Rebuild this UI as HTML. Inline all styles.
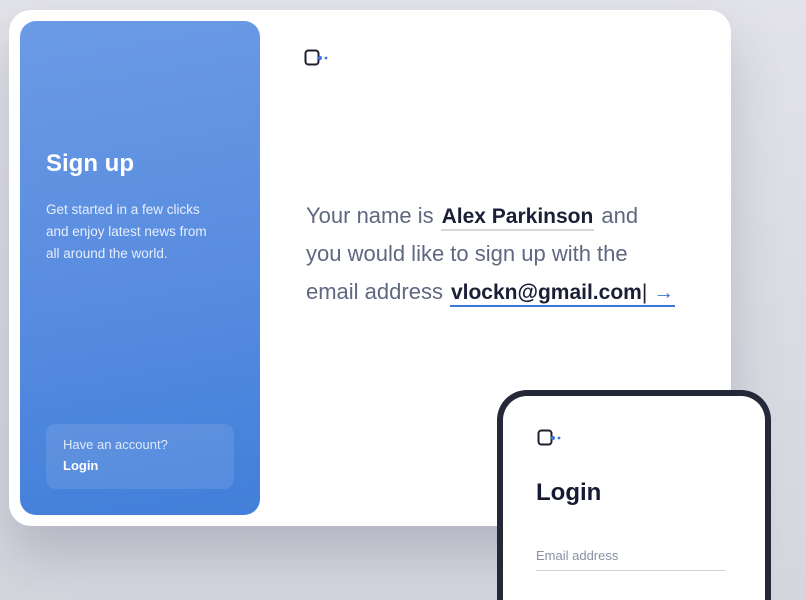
<!DOCTYPE html>
<html style="overflow:hidden;width:806px;height:600px"><head><style>
*{margin:0;padding:0;box-sizing:border-box}
body{width:806px;height:600px;overflow:hidden;background:linear-gradient(180deg,#e2e3e8,#d4d6de);font-family:"Liberation Sans",sans-serif;position:relative}
.card{position:absolute;left:9px;top:10px;width:722px;height:516px;background:#fff;border-radius:22px;box-shadow:0 30px 50px rgba(80,85,110,.25)}
.blue{position:absolute;left:20px;top:21px;width:240px;height:494px;border-radius:16px;background:linear-gradient(170deg,#6b9be6,#5a8de0 50%,#417fda)}
.h{position:absolute;left:46px;top:150px;color:#fff;font-weight:bold;font-size:24px}
.p{position:absolute;left:46px;top:199px;color:#e6eefc;font-size:13.5px;line-height:22px}
.box{position:absolute;left:46px;top:424px;width:188px;height:65px;border-radius:10px;background:rgba(255,255,255,.1);color:#fff}
.box .a{position:absolute;left:17px;top:13px;font-size:13px;color:#dfe8fa}
.box .b{position:absolute;left:17px;top:34px;font-size:13px;font-weight:bold}
.t{position:absolute;left:306px;top:197px;font-size:22px;line-height:38px;color:#5f6781;white-space:nowrap}
.f{color:#1a1f36;font-weight:bold;display:inline-block;line-height:25px;margin:0 7px;padding:0 1px;font-size:21px}
.f1{border-bottom:2px solid #d4d6dc}
.f2{border-bottom:2px solid #3d78db;margin-right:0}
.phone{position:absolute;left:497px;top:390px;width:274px;height:210px;background:#fff;border:6px solid #252839;border-bottom:0;border-radius:30px 30px 0 0}
</style></head><body>
<div class="card"></div>
<div class="blue"></div>
<div class="h">Sign up</div>
<div class="p">Get started in a few clicks<br>and enjoy latest news from<br>all around the world.</div>
<div class="box"><div class="a">Have an account?</div><div class="b">Login</div></div>
<svg style="position:absolute;left:304px;top:49px" width="28" height="18"><rect x="1.5" y="1.5" width="13" height="14" rx="3" fill="none" stroke="#1c1f2c" stroke-width="2"/><circle cx="16" cy="9" r="2" fill="#3b76dc"/><circle cx="22" cy="9" r="1.4" fill="#3b76dc"/></svg>
<div class="t">Your name is<span class="f f1">Alex Parkinson</span>and<br>you would like to sign up with the<br>email address<span class="f f2">vlockn@gmail.com<span style="font-weight:normal">|</span> <span style="color:#3b76dc">→</span></span></div>
<div class="phone">
<svg style="position:absolute;left:34px;top:33px" width="28" height="18"><rect x="1.5" y="1.5" width="13" height="14" rx="3" fill="none" stroke="#1c1f2c" stroke-width="2"/><circle cx="16" cy="9" r="2" fill="#3b76dc"/><circle cx="22" cy="9" r="1.4" fill="#3b76dc"/></svg>
<div style="position:absolute;left:33px;top:83px;font-size:24px;font-weight:bold;color:#161b33">Login</div>
<div style="position:absolute;left:33px;top:152px;font-size:13px;color:#8a90a2">Email address</div>
<div style="position:absolute;left:33px;top:174px;width:189px;height:1px;background:#cfd1d6"></div>
</div>
</body></html>
